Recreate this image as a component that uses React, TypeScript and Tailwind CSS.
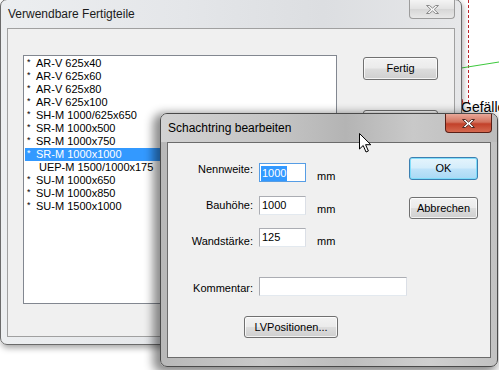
import React from 'react'

const parts = [
  { star: true, text: 'AR-V 625x40' },
  { star: true, text: 'AR-V 625x60' },
  { star: true, text: 'AR-V 625x80' },
  { star: true, text: 'AR-V 625x100' },
  { star: true, text: 'SH-M 1000/625x650' },
  { star: true, text: 'SR-M 1000x500' },
  { star: true, text: 'SR-M 1000x750' },
  { star: true, text: 'SR-M 1000x1000', selected: true },
  { star: false, text: 'UEP-M 1500/1000x175' },
  { star: true, text: 'SU-M 1000x650' },
  { star: true, text: 'SU-M 1000x850' },
  { star: true, text: 'SU-M 1500x1000' },
]

const btn =
  'flex items-center justify-center rounded-[3px] border border-[#707070] bg-[linear-gradient(#f2f2f2_0%,#ebebeb_48%,#dddddd_52%,#cfcfcf_100%)] shadow-[inset_0_0_0_1px_rgba(255,255,255,0.75)] text-[11px] text-black'

const field = 'h-[19px] border border-[#abadb3] border-b-[#e3e9ef] border-r-[#dbdfe6] bg-white pl-[2px] text-[11px] leading-[17px] text-black'

const App: React.FC = () => {
  return (
    <div className="relative w-[499px] h-[370px] overflow-hidden bg-white font-['Liberation_Sans',Arial,sans-serif] text-black">
      {/* canvas behind the windows */}
      <svg className="absolute left-0 top-0" width="499" height="370">
        <line x1="468.5" y1="0" x2="468.5" y2="104" stroke="#c0272d" strokeWidth="1" strokeDasharray="3 2" />
        <line x1="455" y1="69" x2="499" y2="62" stroke="#3cc83c" strokeWidth="1" />
        <line x1="462" y1="99" x2="463" y2="104" stroke="#d02020" strokeWidth="1" />
      </svg>
      <div className="absolute left-[461px] top-[99px] text-[14px] leading-[16px]">Gefälle</div>

      {/* Verwendbare Fertigteile */}
      <div className="absolute left-0 top-[-1px] w-[462px] h-[346px] flex flex-col rounded-[7px] border border-[#6a6a6a] bg-[linear-gradient(90deg,#eceef0,#e4e6e9_40%,#dcdee1_70%,#e6e7e9)] shadow-[1px_3px_6px_rgba(0,0,0,0.35)]">
        <div className="h-[28px] flex justify-between items-start pl-[7px] pr-[6px]">
          <span className="mt-[7px] text-[12px] leading-[14px] text-[#1b1b1b]">Verwendbare Fertigteile</span>
          <div className="w-[46px] h-[19px] flex items-center justify-center rounded-b-[4px] border border-t-0 border-[#9c9c9c] bg-[linear-gradient(#f4f4f4,#e2e2e2_50%,#d6d6d6_51%,#e8e8e8)]">
            <svg width="15" height="11" viewBox="0 0 15 11">
              <path d="M1.5 1.5h3l3 2.6 3-2.6h3l-4.3 4 4.3 4h-3l-3-2.6-3 2.6h-3l4.3-4z" fill="#f6f6f6" stroke="#8a8a8a" strokeWidth="1" strokeLinejoin="round" />
            </svg>
          </div>
        </div>
        <div className="mx-[6px] h-[309px] border border-[#a0a0a0] bg-[#f0f0f0] flex items-start pl-[15px] pt-[26px]">
          <div className="w-[314px] h-[249px] border border-[#828790] bg-white pt-[1px] overflow-hidden">
            {parts.map((p) => (
              <div
                key={p.text}
                className={`h-[13px] ml-[1px] flex items-center text-[11px] leading-[13px] whitespace-nowrap ${p.selected ? 'bg-[#3399ff] text-white' : ''}`}
              >
                {p.star ? (
                  <span className="w-[11px] pl-[2px] text-[9px] self-start leading-[10px]">*</span>
                ) : (
                  <span className="w-[14px]" />
                )}
                <span>{p.text}</span>
              </div>
            ))}
          </div>
          <div className="ml-[26px] flex flex-col">
            <div className={`${btn} mt-[2px] w-[75px] h-[23px]`}>Fertig</div>
            <div className={`${btn} mt-[30px] w-[75px] h-[23px]`} />
          </div>
        </div>
      </div>

      {/* Schachtring bearbeiten */}
      <div className="absolute left-[160px] top-[113px] w-[338px] h-[254px] flex flex-col rounded-[7px] border border-[#4a4a4a] bg-[linear-gradient(90deg,#b8b8b8,#c9c9c9_30%,#bdbdbd_55%,#cfcfcf_80%,#c2c2c2)] shadow-[-4px_3px_10px_3px_rgba(0,0,0,0.45)]">
        <div className="h-[28px] flex justify-between items-start pl-[7px] pr-[5px] bg-[linear-gradient(90deg,#d2d2d2,#c4c4c4_35%,#b4b4b4_55%,#c9c9c9_75%,#bcbcbc)] rounded-t-[6px]">
          <span className="mt-[7px] text-[12px] leading-[14px] text-black">Schachtring bearbeiten</span>
          <div className="w-[47px] h-[19px] flex items-center justify-center rounded-b-[4px] border border-t-0 border-[#5a1f16] bg-[linear-gradient(#e9a899,#d2735e_45%,#c2412a_55%,#d5694f)]">
            <svg width="15" height="11" viewBox="0 0 15 11">
              <path d="M1.5 1.5h3l3 2.6 3-2.6h3l-4.3 4 4.3 4h-3l-3-2.6-3 2.6h-3l4.3-4z" fill="#ffffff" stroke="#4d2a24" strokeWidth="1" strokeLinejoin="round" />
            </svg>
          </div>
        </div>
        <div className="mx-[6px] h-[216px] border border-[#6b6b6b] bg-[#f0f0f0] flex items-start text-[11px]">
          <div className="w-[241px] flex flex-col">
            <div className="mt-[20px] flex items-start h-[19px]">
              <span className="w-[85px] text-right leading-[19px] mt-[-3px]">Nennweite:</span>
              <div className="ml-[6px] w-[47px] h-[19px] border border-[#569de5] bg-white pl-[1px] pt-[1px]">
                <span className="bg-[#3399ff] text-white leading-[15px] inline-block px-[1px]">1000</span>
              </div>
              <span className="ml-[11px] mt-[4px] leading-[19px]">mm</span>
            </div>
            <div className="mt-[14px] flex items-start h-[19px]">
              <span className="w-[85px] text-right leading-[19px]">Bauhöhe:</span>
              <div className={`${field} ml-[6px] w-[47px]`}>1000</div>
              <span className="ml-[11px] mt-[4px] leading-[19px]">mm</span>
            </div>
            <div className="mt-[13px] flex items-start h-[19px]">
              <span className="w-[85px] text-right leading-[19px] mt-[4px]">Wandstärke:</span>
              <div className={`${field} ml-[6px] w-[47px]`}>125</div>
              <span className="ml-[11px] mt-[4px] leading-[19px]">mm</span>
            </div>
            <div className="mt-[30px] flex items-start h-[19px]">
              <span className="w-[85px] text-right leading-[19px] mt-[2px]">Kommentar:</span>
              <div className={`${field} ml-[6px] w-[148px]`} />
            </div>
            <div className={`${btn} mt-[20px] ml-[76px] w-[94px] h-[22px]`}>LVPositionen...</div>
          </div>
          <div className="flex flex-col">
            <div className="mt-[14px] w-[69px] h-[23px] flex items-center justify-center rounded-[3px] border border-[#3c7fb1] bg-[linear-gradient(#e5f4fc_0%,#d4edfb_48%,#bfe3f9_52%,#a9d9f5_100%)] shadow-[inset_0_0_0_1px_rgba(120,220,250,0.9)] text-[11px]">
              OK
            </div>
            <div className={`${btn} mt-[17px] w-[69px] h-[22px]`}>Abbrechen</div>
          </div>
        </div>
      </div>

      {/* mouse pointer */}
      <svg className="absolute left-[359px] top-[133px]" width="13" height="21" viewBox="0 0 13 21">
        <path d="M0.5 0.5v15.5l3.7-3.5 2.8 6.5 2.4-1-2.8-6.3h5.2z" fill="#ffffff" stroke="#000000" strokeWidth="1" strokeLinejoin="round" />
      </svg>
    </div>
  )
}

export default App
